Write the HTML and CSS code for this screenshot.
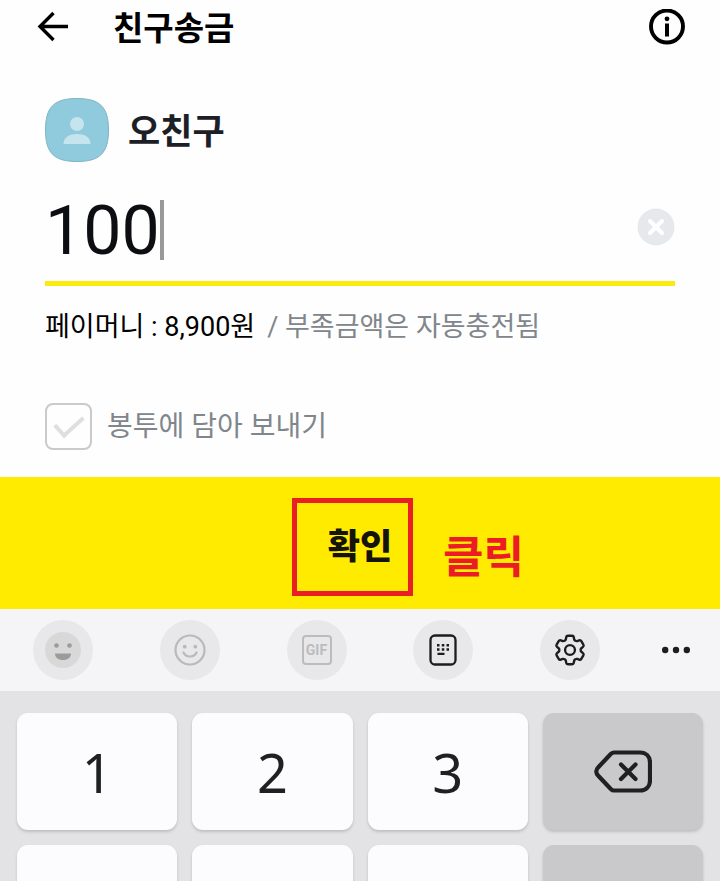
FILE: index.html
```html
<!DOCTYPE html>
<html lang="ko">
<head>
<meta charset="utf-8">
<meta name="viewport" content="width=device-width, initial-scale=1">
<title>친구송금</title>
<link rel="stylesheet" href="styles.css">
</head>
<body>
<div class="screen">
  <header class="topbar">
    <button class="plain" type="button" aria-label="뒤로">
      <svg width="32" height="32" viewBox="0 0 32 32" fill="none" stroke="#000" stroke-width="3.400"><path d="M16.500 2 3 15.500l13.500 13.500M3 15.500h28"/></svg>
    </button>
    <h1 class="title">친구송금</h1>
    <button class="plain" type="button" aria-label="정보">
      <svg width="36" height="36" viewBox="0 0 36 36"><circle cx="18" cy="17.500" r="16" fill="none" stroke="#000" stroke-width="3.900"/><circle cx="18" cy="9.800" r="2.400"/><path d="M16 14.500h4v13h-4z"/></svg>
    </button>
  </header>

  <main class="form">
    <div class="friend">
      <svg width="64" height="64" viewBox="0 0 64 64" aria-hidden="true">
        <path d="M32 .5C55 .5 63.500 9 63.500 32S55 63.500 32 63.500.5 55 .5 32 9 .5 32 .5Z" fill="#8fcadd" stroke="#7fb4c4"/>
        <circle cx="32" cy="26" r="7" fill="#c5e4ee"/>
        <path d="M18.500 46c0-7 6-10 13.500-10s13.500 3 13.500 10Z" fill="#c5e4ee"/>
      </svg>
      <h2 class="name">오친구</h2>
    </div>

    <div class="amount">
      <input class="amount-input" type="text" inputmode="numeric" value="100" aria-label="금액">
      <span class="caret"></span>
      <button class="plain clear" type="button" aria-label="지우기">
        <svg width="38" height="38" viewBox="0 0 38 38"><circle cx="19" cy="19" r="18.500" fill="#e5e9ec"/><path d="m13 13 12 12M25 13 13 25" stroke="#fff" stroke-width="4" stroke-linecap="round"/></svg>
      </button>
    </div>

    <p class="balance"><span>페이머니 : 8,900원</span> <span class="muted">/ 부족금액은 자동충전됨</span></p>

    <label class="envelope">
      <input class="check" type="checkbox">
      <span>봉투에 담아 보내기</span>
    </label>
  </main>

  <div class="confirm-area">
    <button class="confirm" type="button">확인</button>
    <span class="mark-box"></span>
    <span class="mark-text">클릭</span>
  </div>

  <div class="toolbar">
    <div class="tools">
      <button class="tool" type="button" aria-label="이모지">
        <svg width="36" height="36" viewBox="0 0 36 36"><circle cx="18" cy="18" r="18" fill="#d8d8d9"/><g fill="#9b9b9c"><circle cx="11.500" cy="13.500" r="2.300"/><circle cx="24.500" cy="13.500" r="2.300"/><path d="M10 21.500h16c0 4-3 6.500-8 6.500s-8-2.500-8-6.500Z"/></g></svg>
      </button>
      <button class="tool" type="button" aria-label="스티커">
        <svg width="32" height="32" viewBox="0 0 32 32" fill="none" stroke="#b9b9ba" stroke-width="2.200" stroke-linecap="round"><circle cx="16" cy="16" r="14.500"/><path d="M9.500 18.500c2.500 5.300 10.500 5.300 13 0"/><g fill="#b9b9ba" stroke="none"><circle cx="10.700" cy="12.700" r="1.900"/><circle cx="21.300" cy="12.700" r="1.900"/></g></svg>
      </button>
      <button class="tool" type="button"><span class="gif">GIF</span></button>
      <button class="tool" type="button" aria-label="키보드">
        <svg width="28" height="32" viewBox="0 0 28 32"><rect x="1.500" y="1.500" width="25" height="29" rx="4.500" fill="none" stroke="#1c1d1f" stroke-width="2.300"/><path d="M8 10h2.500v2.500H8zM12.800 10h2.500v2.500h-2.500zM17.500 10H20v2.500h-2.500zM8 14.300h2.500v2.500H8zM12.800 14.300h2.500v2.500h-2.500zM17.500 14.300H20v2.500h-2.500zM8.500 18.800h7v2.200h-7z" fill="#1c1d1f"/></svg>
      </button>
      <button class="tool" type="button" aria-label="설정">
        <svg width="38" height="38" viewBox="0 0 24 24" fill="none" stroke="#1c1d1f" stroke-width="1.500" stroke-linejoin="round"><path d="M9.594 3.940c.09-.542.56-.94 1.110-.94h2.593c.55 0 1.020.398 1.110.94l.213 1.281c.063.374.313.686.645.87.074.04.147.083.22.127.325.196.72.257 1.075.124l1.217-.456a1.125 1.125 0 0 1 1.370.49l1.296 2.247a1.125 1.125 0 0 1-.26 1.431l-1.003.827c-.293.241-.438.613-.43.992a7.723 7.723 0 0 1 0 .255c-.008.378.137.75.43.991l1.004.827c.424.35.534.955.26 1.430l-1.298 2.247a1.125 1.125 0 0 1-1.369.491l-1.217-.456c-.355-.133-.75-.072-1.076.124a6.470 6.470 0 0 1-.22.128c-.331.183-.581.495-.644.869l-.213 1.281c-.09.543-.56.94-1.110.94h-2.594c-.55 0-1.019-.398-1.110-.94l-.213-1.281c-.062-.374-.312-.686-.644-.87a6.520 6.520 0 0 1-.22-.127c-.325-.196-.72-.257-1.076-.124l-1.217.456a1.125 1.125 0 0 1-1.369-.49l-1.297-2.247a1.125 1.125 0 0 1 .26-1.431l1.004-.827c.292-.24.437-.613.43-.991a6.932 6.932 0 0 1 0-.255c.007-.38-.138-.751-.43-.992l-1.004-.827a1.125 1.125 0 0 1-.26-1.430l1.297-2.247a1.125 1.125 0 0 1 1.370-.491l1.216.456c.356.133.751.072 1.076-.124.072-.044.146-.086.22-.128.332-.183.582-.495.644-.869l.214-1.280Z"/><circle cx="12" cy="12" r="3.100"/></svg>
      </button>
    </div>
    <button class="plain" type="button" aria-label="더보기">
      <svg width="28" height="8" viewBox="0 0 28 8" fill="#1c1d1f"><circle cx="3.200" cy="4" r="3.200"/><circle cx="14" cy="4" r="3.200"/><circle cx="24.800" cy="4" r="3.200"/></svg>
    </button>
  </div>

  <div class="keypad">
    <button class="key" type="button">1</button>
    <button class="key" type="button">2</button>
    <button class="key" type="button">3</button>
    <button class="key key-dark" type="button" aria-label="삭제">
      <svg width="58" height="44" viewBox="0 0 58 44" fill="none" stroke="#1f2022" stroke-width="4.200" stroke-linecap="round" stroke-linejoin="round"><path d="M20 2.500h26c6 0 10 4 10 10v18c0 6-4 10-10 10H20c-1.200 0-2-.4-3-1.300L4.500 26c-3-3-3-6 0-9L17 3.800c1-.9 1.800-1.300 3-1.300Z"/><path d="m27 14.500 14.500 14.500M41.500 14.500 27 29"/></svg>
    </button>
    <button class="key" type="button" aria-label="4"></button>
    <button class="key" type="button" aria-label="5"></button>
    <button class="key" type="button" aria-label="6"></button>
    <button class="key key-dark" type="button" aria-label="완료"></button>
  </div>
</div>
</body>
</html>
```

FILE: styles.css
```css
* {
  box-sizing: border-box;
}

body {
  margin: 0;
  background: #fefefe;
  font-family: Roboto, "Noto Sans CJK KR", sans-serif;
  color: #000;
}

button {
  padding: 0;
  border: 0;
  color: inherit;
  font-family: inherit;
  cursor: pointer;
}

svg {
  display: block;
}

.screen {
  display: flex;
  flex-direction: column;
  height: 100vh;
  overflow: hidden;
}

.plain {
  flex: none;
  background: none;
}

.topbar {
  display: flex;
  align-items: center;
  height: 53px;
  padding: 0 35px 0 37px;
}

.title {
  flex: 1;
  margin: 0 0 0 44px;
  padding-top: 4px;
  font-size: 33px;
  font-weight: 700;
  line-height: 48px;
}

.form {
  display: flex;
  flex-direction: column;
  padding: 45px 45px 27px;
}

.friend {
  display: flex;
  align-items: center;
  gap: 19px;
  height: 64px;
}

.name {
  margin: 0;
  padding-top: 5px;
  color: #1c2026;
  font-size: 35px;
  font-weight: 700;
  line-height: 48px;
}

.amount {
  display: flex;
  align-items: center;
  height: 124px;
  padding-top: 16px;
  border-bottom: 5px solid #fbe90f;
}

.amount-input {
  width: 3ch;
  height: 80px;
  padding: 2px 0 0;
  border: 0;
  outline: 0;
  background: none;
  color: #0c0e11;
  font-family: Roboto, sans-serif;
  font-size: 68px;
}

.caret {
  width: 4px;
  height: 60px;
  background: #999;
}

.clear {
  margin: 0 0 6px auto;
}

.balance {
  display: flex;
  flex-wrap: wrap;
  column-gap: 12px;
  margin: 21px 0 0;
  font-size: 27px;
  line-height: 40px;
}

.muted {
  color: #80868c;
}

.envelope {
  display: flex;
  align-items: center;
  gap: 15px;
  margin-top: 56px;
  color: #80868c;
  font-size: 28px;
  line-height: 40px;
}

.check {
  flex: none;
  width: 47px;
  height: 47px;
  margin: 0;
  border: 2px solid #c9cacb;
  border-radius: 8px;
  appearance: none;
  display: grid;
  place-items: center;
}

.check::before {
  content: "";
  width: 12px;
  height: 24px;
  margin-bottom: 8px;
  border: solid #dedfe0;
  border-width: 0 4px 4px 0;
  rotate: 48deg;
}

.confirm-area {
  position: relative;
  flex: none;
  height: 132px;
}

.confirm {
  width: 100%;
  height: 100%;
  background: #ffeb00;
  color: #14140c;
  font-size: 35px;
  font-weight: 900;
}

.mark-box {
  position: absolute;
  top: 21px;
  left: calc(50% - 68px);
  width: 121px;
  height: 98px;
  border: 5px solid #e91f23;
  pointer-events: none;
}

.mark-text {
  position: absolute;
  top: 51px;
  left: calc(50% + 83px);
  color: #ec1c24;
  font-size: 44px;
  font-weight: 700;
  line-height: 60px;
  pointer-events: none;
}

.toolbar {
  display: flex;
  flex: none;
  align-items: center;
  gap: 62px;
  height: 82px;
  padding: 0 30px 0 33px;
  background: #f5f5f8;
}

.tools {
  display: flex;
  flex: 1;
  justify-content: space-between;
}

.tool {
  display: grid;
  place-items: center;
  width: 60px;
  height: 60px;
  border-radius: 50%;
  background: #e8e8ea;
}

.gif {
  width: 30px;
  height: 30px;
  border: 2px solid #bcbcbd;
  border-radius: 4px;
  color: #bcbcbd;
  font-size: 14px;
  font-weight: 700;
  line-height: 26px;
}

.keypad {
  display: grid;
  flex: 1;
  grid-template-columns: repeat(4, 1fr);
  grid-auto-rows: 117px;
  gap: 15px;
  min-height: 0;
  padding: 22px 17px 0;
  overflow: hidden;
  background: #e3e3e5;
}

.key {
  display: grid;
  place-items: center;
  border-radius: 11px;
  background: #fcfcfe;
  box-shadow: 0 2px 3px #bfbfc2;
  color: #1f2022;
  font-family: "Noto Sans", sans-serif;
  font-size: 54px;
  line-height: 60px;
}

.key-dark {
  background: #c9c9cb;
}
```
